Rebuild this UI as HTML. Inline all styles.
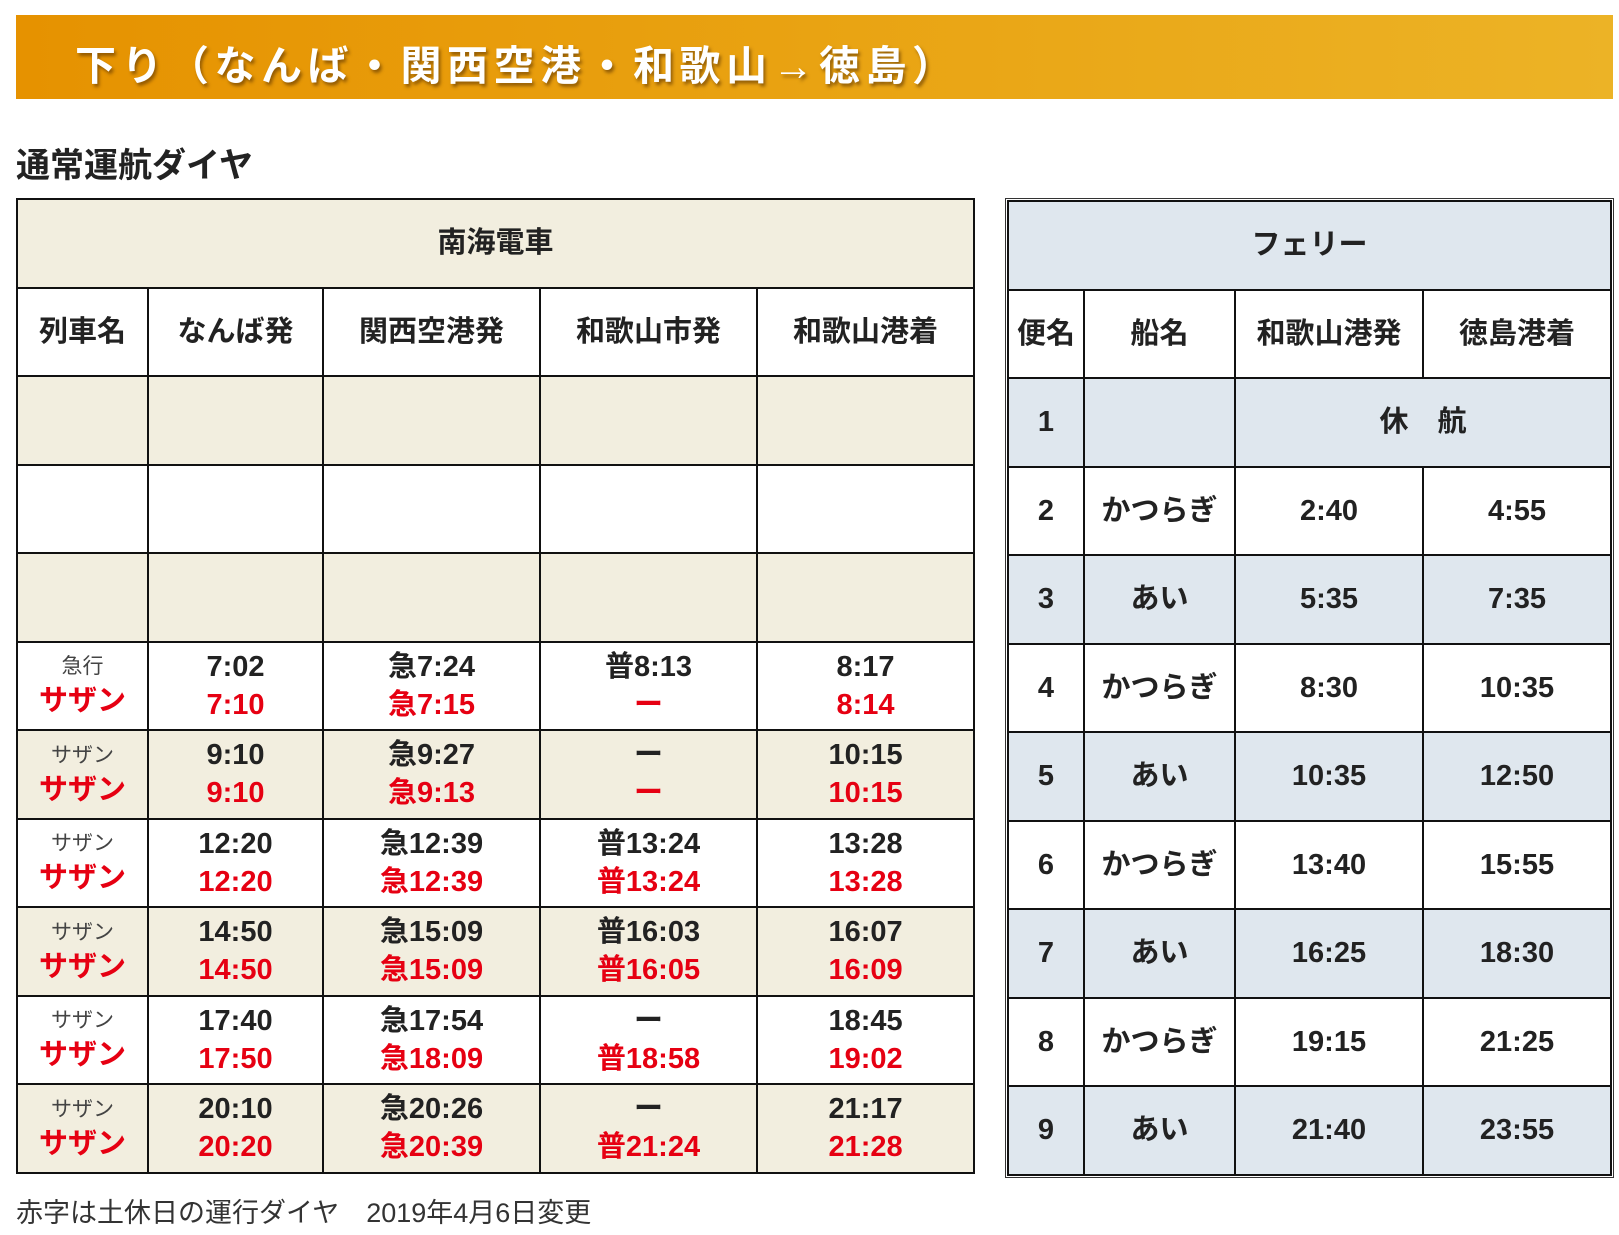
<!DOCTYPE html>
<html><head><meta charset="utf-8"><style>
body{margin:0;background:#fff;font-family:"Liberation Sans","Noto Sans CJK JP",sans-serif;color:#222;width:1619px;height:1235px;position:relative;overflow:hidden}
.banner{position:absolute;left:16px;top:15px;width:1597px;height:84px;background:linear-gradient(90deg,#e69200 0%,#e9a312 50%,#ecb326 100%)}
.banner span{position:absolute;left:59px;top:17px;font-size:41px;font-weight:bold;color:#fff;letter-spacing:5.5px;text-shadow:2px 3px 3px rgba(90,50,0,.6);white-space:nowrap}
h2{position:absolute;left:16px;top:138px;margin:0;font-size:34px;font-weight:bold;color:#222}
table{position:absolute;border-collapse:collapse;table-layout:fixed}
td{border:2px solid #111;text-align:center;padding:0;font-weight:bold;font-size:29px;line-height:38px}
.L{left:16px;top:198px;width:957px}
.L td{height:86.5px}
.b{background:#f2eedf}
.w{background:#fff}
.r{color:#e60012}
.s{font-size:21px;font-weight:normal;color:#444;line-height:31px}
.nm{font-size:29px;color:#e60012;line-height:38px}
.F{left:1007px;top:200px;width:603px;outline:1px solid #333;outline-offset:1px}
.F td{height:86.5px}
.g{background:#dfe7ee}
.foot{position:absolute;left:16px;top:1191px;font-size:27px;color:#333}
</style></head><body>
<div class="banner"><span>下り（なんば・関西空港・和歌山→徳島）</span></div>
<h2>通常運航ダイヤ</h2>
<table class="L">
<colgroup><col style="width:131px"><col style="width:175px"><col style="width:217px"><col style="width:217px"><col style="width:217px"></colgroup>
<tr class="b"><td colspan="5">南海電車</td></tr>
<tr class="w"><td>列車名</td><td>なんば発</td><td>関西空港発</td><td>和歌山市発</td><td>和歌山港着</td></tr>
<tr class="b"><td></td><td></td><td></td><td></td><td></td></tr>
<tr class="w"><td></td><td></td><td></td><td></td><td></td></tr>
<tr class="b"><td></td><td></td><td></td><td></td><td></td></tr>
<tr class="w"><td><div class="s">急行</div><div class="nm">サザン</div></td><td>7:02<br><span class="r">7:10</span></td><td>急7:24<br><span class="r">急7:15</span></td><td>普8:13<br><span class="r">ー</span></td><td>8:17<br><span class="r">8:14</span></td></tr>
<tr class="b"><td><div class="s">サザン</div><div class="nm">サザン</div></td><td>9:10<br><span class="r">9:10</span></td><td>急9:27<br><span class="r">急9:13</span></td><td>ー<br><span class="r">ー</span></td><td>10:15<br><span class="r">10:15</span></td></tr>
<tr class="w"><td><div class="s">サザン</div><div class="nm">サザン</div></td><td>12:20<br><span class="r">12:20</span></td><td>急12:39<br><span class="r">急12:39</span></td><td>普13:24<br><span class="r">普13:24</span></td><td>13:28<br><span class="r">13:28</span></td></tr>
<tr class="b"><td><div class="s">サザン</div><div class="nm">サザン</div></td><td>14:50<br><span class="r">14:50</span></td><td>急15:09<br><span class="r">急15:09</span></td><td>普16:03<br><span class="r">普16:05</span></td><td>16:07<br><span class="r">16:09</span></td></tr>
<tr class="w"><td><div class="s">サザン</div><div class="nm">サザン</div></td><td>17:40<br><span class="r">17:50</span></td><td>急17:54<br><span class="r">急18:09</span></td><td>ー<br><span class="r">普18:58</span></td><td>18:45<br><span class="r">19:02</span></td></tr>
<tr class="b"><td><div class="s">サザン</div><div class="nm">サザン</div></td><td>20:10<br><span class="r">20:20</span></td><td>急20:26<br><span class="r">急20:39</span></td><td>ー<br><span class="r">普21:24</span></td><td>21:17<br><span class="r">21:28</span></td></tr>
</table>
<table class="F">
<colgroup><col style="width:76px"><col style="width:151px"><col style="width:188px"><col style="width:188px"></colgroup>
<tr class="g"><td colspan="4">フェリー</td></tr>
<tr class="w"><td>便名</td><td>船名</td><td>和歌山港発</td><td>徳島港着</td></tr>
<tr class="g"><td>1</td><td></td><td colspan="2">休　航</td></tr>
<tr class="w"><td>2</td><td>かつらぎ</td><td>2:40</td><td>4:55</td></tr>
<tr class="g"><td>3</td><td>あい</td><td>5:35</td><td>7:35</td></tr>
<tr class="w"><td>4</td><td>かつらぎ</td><td>8:30</td><td>10:35</td></tr>
<tr class="g"><td>5</td><td>あい</td><td>10:35</td><td>12:50</td></tr>
<tr class="w"><td>6</td><td>かつらぎ</td><td>13:40</td><td>15:55</td></tr>
<tr class="g"><td>7</td><td>あい</td><td>16:25</td><td>18:30</td></tr>
<tr class="w"><td>8</td><td>かつらぎ</td><td>19:15</td><td>21:25</td></tr>
<tr class="g"><td>9</td><td>あい</td><td>21:40</td><td>23:55</td></tr>
</table>
<div class="foot">赤字は土休日の運行ダイヤ　2019年4月6日変更</div>
</body></html>
